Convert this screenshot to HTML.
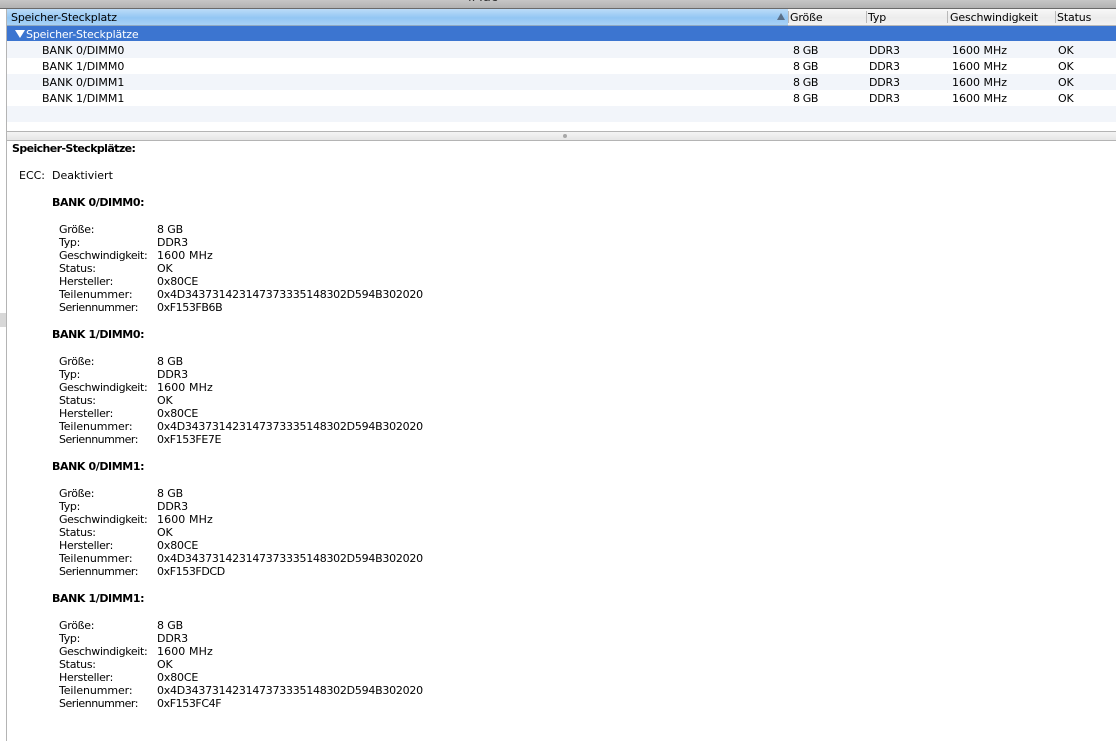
<!DOCTYPE html>
<html lang="de">
<head>
<meta charset="utf-8">
<title>Speicher</title>
<style>
html,body{margin:0;padding:0;background:#fff;}
body{width:1116px;height:741px;position:relative;overflow:hidden;font-family:"DejaVu Sans","Liberation Sans",sans-serif;font-size:11px;color:#000;}
div{position:absolute;white-space:pre;}
.t{line-height:16px;height:16px;}
.b{height:16px;left:7px;right:0;}
.l{left:59px;line-height:13px;letter-spacing:-.3px;}
.l .g{letter-spacing:-.35px;}
.l .n{letter-spacing:-.1px;}
.l .r{letter-spacing:-.48px;}
.v{left:157px;line-height:13px;letter-spacing:-.15px;}
.v .m{letter-spacing:.1px;}
.v .x{letter-spacing:-.26px;}
.v .r{letter-spacing:-.4px;}
.h{left:52px;line-height:13px;font-weight:bold;letter-spacing:-.4px;}
.s{width:1px;height:12px;top:11px;background:#b9b9b9;}
.c1{left:793px;letter-spacing:-.4px;}
.c2{left:869px;letter-spacing:-.2px;}
.c3{left:952px;}
.c4{left:1058px;letter-spacing:-.2px;}
.hd{top:10px;letter-spacing:-.15px;}
</style>
</head>
<body>
<!-- title bar -->
<div style="left:0;top:0;width:1116px;height:8px;background:linear-gradient(#c6c6c6,#b2b2b2);border-bottom:1px solid #6a6a6a;"></div>
<div style="left:468px;top:-9px;font-size:13px;line-height:14px;color:#333;">iMac</div>
<!-- left edge -->
<div style="left:6px;top:9px;width:1px;height:732px;background:#b4b4b4;"></div>
<div style="left:0;top:313px;width:6px;height:14px;background:#d8d8d8;"></div>
<!-- header -->
<div style="left:7px;top:9px;right:0;height:16px;background:linear-gradient(#f8f8f8,#ececec 55%,#f2f2f2);border-bottom:1px solid #b9b9b9;"></div>
<div style="left:7px;top:9px;width:781px;height:16px;background:linear-gradient(#bcdcf8,#93c6f3 55%,#a8d2f6);border-bottom:1px solid #8fa9c2;"></div>
<div class="t hd" style="left:11px;">Speicher-Steckplatz</div>
<div style="left:777px;top:13px;width:0;height:0;border-left:4px solid transparent;border-right:4px solid transparent;border-bottom:7px solid #5a7088;"></div>
<div class="s" style="left:788px;"></div>
<div class="s" style="left:866px;"></div>
<div class="s" style="left:947px;"></div>
<div class="s" style="left:1055px;"></div>
<div class="t hd" style="left:790px;">Größe</div>
<div class="t hd" style="left:868px;">Typ</div>
<div class="t hd" style="left:950px;">Geschwindigkeit</div>
<div class="t hd" style="left:1057px;">Status</div>
<!-- rows -->
<div class="b" style="top:26px;height:15px;background:#3c75d0;"></div>
<div class="b" style="top:41px;height:17px;background:#f2f5fa;"></div>
<div class="b" style="top:74px;background:#f2f5fa;"></div>
<div class="b" style="top:106px;background:#f2f5fa;"></div>
<div style="left:15px;top:30px;width:0;height:0;border-left:5px solid transparent;border-right:5px solid transparent;border-top:8px solid #fff;"></div>
<div class="t" style="left:26px;top:27px;color:#fff;letter-spacing:-.15px;">Speicher-Steckplätze</div>

<div class="t" style="left:42px;top:43px;">BANK 0/DIMM0</div>
<div class="t c1" style="top:43px;">8 GB</div>
<div class="t c2" style="top:43px;">DDR3</div>
<div class="t c3" style="top:43px;">1600 MHz</div>
<div class="t c4" style="top:43px;">OK</div>

<div class="t" style="left:42px;top:59px;">BANK 1/DIMM0</div>
<div class="t c1" style="top:59px;">8 GB</div>
<div class="t c2" style="top:59px;">DDR3</div>
<div class="t c3" style="top:59px;">1600 MHz</div>
<div class="t c4" style="top:59px;">OK</div>

<div class="t" style="left:42px;top:75px;">BANK 0/DIMM1</div>
<div class="t c1" style="top:75px;">8 GB</div>
<div class="t c2" style="top:75px;">DDR3</div>
<div class="t c3" style="top:75px;">1600 MHz</div>
<div class="t c4" style="top:75px;">OK</div>

<div class="t" style="left:42px;top:91px;">BANK 1/DIMM1</div>
<div class="t c1" style="top:91px;">8 GB</div>
<div class="t c2" style="top:91px;">DDR3</div>
<div class="t c3" style="top:91px;">1600 MHz</div>
<div class="t c4" style="top:91px;">OK</div>

<!-- splitter -->
<div style="left:7px;top:131px;right:0;height:8px;background:linear-gradient(#f4f4f4,#e6e6e6);border-top:1px solid #b4b4b4;border-bottom:1px solid #b4b4b4;"></div>
<div style="left:563px;top:134px;width:4px;height:4px;border-radius:2px;background:#a8a8a8;"></div>

<!-- detail -->
<div style="left:12px;top:142px;line-height:13px;font-weight:bold;letter-spacing:-.6px;">Speicher-Steckplätze:</div>
<div style="left:19px;top:169px;line-height:13px;">ECC:</div>
<div style="left:52px;top:169px;line-height:13px;">Deaktiviert</div>

<div class="h" style="top:196px;">BANK 0/DIMM0:</div>
<div class="l" style="top:223px;">Größe:
Typ:
<span class="g">Geschwindigkeit:</span>
Status:
Hersteller:
<span class="n">Teilenummer:</span>
<span class="r">Seriennummer:</span></div>
<div class="v" style="top:223px;">8 GB
DDR3
<span class="m">1600 MHz</span>
OK
0x80CE
<span class="x">0x4D343731423147373335148302D594B302020</span>
<span class="r">0xF153FB6B</span></div>

<div class="h" style="top:328px;">BANK 1/DIMM0:</div>
<div class="l" style="top:355px;">Größe:
Typ:
<span class="g">Geschwindigkeit:</span>
Status:
Hersteller:
<span class="n">Teilenummer:</span>
<span class="r">Seriennummer:</span></div>
<div class="v" style="top:355px;">8 GB
DDR3
<span class="m">1600 MHz</span>
OK
0x80CE
<span class="x">0x4D343731423147373335148302D594B302020</span>
<span class="r">0xF153FE7E</span></div>

<div class="h" style="top:460px;">BANK 0/DIMM1:</div>
<div class="l" style="top:487px;">Größe:
Typ:
<span class="g">Geschwindigkeit:</span>
Status:
Hersteller:
<span class="n">Teilenummer:</span>
<span class="r">Seriennummer:</span></div>
<div class="v" style="top:487px;">8 GB
DDR3
<span class="m">1600 MHz</span>
OK
0x80CE
<span class="x">0x4D343731423147373335148302D594B302020</span>
<span class="r">0xF153FDCD</span></div>

<div class="h" style="top:592px;">BANK 1/DIMM1:</div>
<div class="l" style="top:619px;">Größe:
Typ:
<span class="g">Geschwindigkeit:</span>
Status:
Hersteller:
<span class="n">Teilenummer:</span>
<span class="r">Seriennummer:</span></div>
<div class="v" style="top:619px;">8 GB
DDR3
<span class="m">1600 MHz</span>
OK
0x80CE
<span class="x">0x4D343731423147373335148302D594B302020</span>
<span class="r">0xF153FC4F</span></div>
</body>
</html>
